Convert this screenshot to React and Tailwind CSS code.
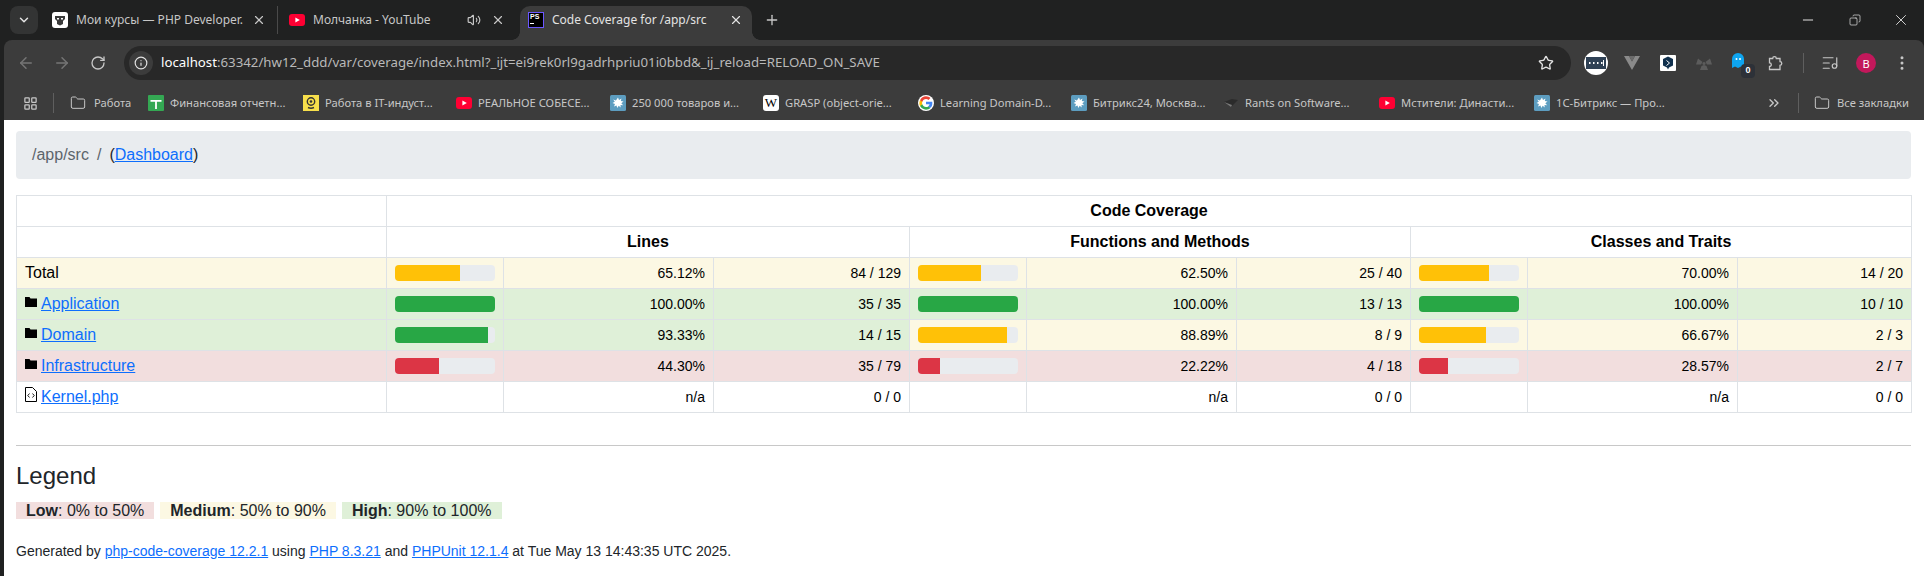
import React from 'react';
import {
  ArrowLeft, ArrowRight, ChevronDown, ChevronsRight, Copy, EllipsisVertical, Folder, Info,
  LayoutGrid, ListMusic, Minus, Plus, RotateCw, Star, Volume2, X,
} from 'lucide-react';

const uiFont = "font-['Noto_Sans',sans-serif]";

const YouTubeIcon = () => (
  <svg viewBox="0 0 16 16" className="w-4 h-4 shrink-0">
    <rect x="0" y="2" width="16" height="12" rx="3" fill="#ff0033" />
    <path d="M6.4 5.4 10.8 8l-4.4 2.6z" fill="#fff" />
  </svg>
);

const OtusIcon = () => (
  <svg viewBox="0 0 16 16" className="w-4 h-4 shrink-0">
    <rect width="16" height="16" rx="3" fill="#fff" />
    <path d="M3 4h10v3l-2 2v3l-3 1.500-3-1.500V9L3 7z" fill="#3a3a3a" />
    <path d="M5 6h2v1.500H5zM9 6h2v1.500H9z" fill="#fff" />
  </svg>
);

const SplatIcon = () => (
  <svg viewBox="0 0 16 16" className="w-4 h-4 shrink-0">
    <rect width="16" height="16" rx="1.500" fill="#5d9dc0" />
    <path d="M8 2.500l1 2.500 2.500-1.500-.7 2.600 2.700.4-2.200 1.700 1.900 2-2.700-.3.200 2.600-2-1.800-1.400 2.300-.8-2.600-2.500 1 1-2.500-2.500-.8 2.300-1.400L3.200 4.500l2.700 1z" fill="#fff" />
  </svg>
);

const SheetIcon = () => (
  <svg viewBox="0 0 16 16" className="w-4 h-4 shrink-0">
    <rect width="16" height="16" rx="1" fill="#34a853" />
    <path d="M2.500 5h11v1.800H8.900V14H7.100V6.800H2.500z" fill="#fff" />
  </svg>
);

const YellowIcon = () => (
  <svg viewBox="0 0 16 16" className="w-4 h-4 shrink-0">
    <rect width="16" height="16" fill="#f7df4b" />
    <circle cx="8" cy="6.500" r="3.700" fill="none" stroke="#333" strokeWidth="1.400" />
    <circle cx="8" cy="6.500" r="1.300" fill="#333" />
    <path d="M5 12.500c2 1 4 1 6 0" fill="none" stroke="#333" strokeWidth="1.400" />
  </svg>
);

const WikiIcon = () => (
  <span className="w-4 h-4 shrink-0 rounded-[3px] bg-white flex items-center justify-center text-black text-[13px] leading-none font-['Liberation_Serif',serif]">
    W
  </span>
);

const GoogleIcon = () => (
  <svg viewBox="0 0 48 48" className="w-4 h-4 shrink-0">
    <circle cx="24" cy="24" r="24" fill="#fff" />
    <path d="M43 24.400c0-1.300-.1-2.600-.4-3.800H24v7.300h10.800c-.5 2.400-1.900 4.500-4 5.900v4.800h6.400C41 35.100 43 30.200 43 24.400z" fill="#4285f4" />
    <path d="M24 44c5.400 0 9.900-1.800 13.200-4.800l-6.400-4.800c-1.800 1.200-4.100 1.900-6.800 1.900-5.200 0-9.600-3.500-11.200-8.200H6.200v5C9.500 39.500 16.200 44 24 44z" fill="#34a853" />
    <path d="M12.800 28.100c-.8-2.400-.8-5.100 0-7.500v-5H6.200c-2.800 5.600-2.800 11.900 0 17.500z" fill="#fbbc05" />
    <path d="M24 12c2.900 0 5.500 1 7.600 3l5.700-5.700C33.900 6.100 29.400 4 24 4 16.200 4 9.500 8.500 6.200 15.600l6.600 5c1.600-4.700 6-8.600 11.200-8.600z" fill="#ea4335" />
  </svg>
);

const RantsIcon = () => (
  <svg viewBox="0 0 16 16" className="w-4 h-4 shrink-0">
    <path d="M1 7l8-3 6 1-7 7z" fill="#2b2b2b" />
    <path d="M1 7l7 5 1-2z" fill="#7a7a7a" />
  </svg>
);

const bookmarks = [
  { icon: <SheetIcon />, title: 'Финансовая отчетн...', width: 'w-[155px]' },
  { icon: <YellowIcon />, title: 'Работа в IT-индуст...', width: 'w-[153px]' },
  { icon: <YouTubeIcon />, title: 'РЕАЛЬНОЕ СОБЕСЕ...', width: 'w-[154px]' },
  { icon: <SplatIcon />, title: '250 000 товаров и...', width: 'w-[153px]' },
  { icon: <WikiIcon />, title: 'GRASP (object-orie...', width: 'w-[155px]' },
  { icon: <GoogleIcon />, title: 'Learning Domain-D...', width: 'w-[153px]' },
  { icon: <SplatIcon />, title: 'Битрикс24, Москва...', width: 'w-[152px]' },
  { icon: <RantsIcon />, title: 'Rants on Software...', width: 'w-[156px]' },
  { icon: <YouTubeIcon />, title: 'Мстители: Династи...', width: 'w-[155px]' },
  { icon: <SplatIcon />, title: '1С-Битрикс — Про...', width: 'w-[232px]' },
];

const TabStrip = () => (
  <div className={`h-10 flex items-start pt-1.5 pl-2.5 text-[12px] leading-none text-[#c7c7c7] ${uiFont}`}>
    <div className="w-7 h-7 rounded-lg bg-[#333434] flex items-center justify-center mr-[10px] text-[#e3e3e3] shrink-0">
      <ChevronDown size={14} strokeWidth={2.5} />
    </div>
    <div className="w-[230px] h-7 shrink-0 flex items-center pl-[4px] pr-[11px] border-r border-[#4a4a4a]">
      <OtusIcon />
      <span className="ml-2 flex-1 whitespace-nowrap">Мои курсы — PHP Developer.</span>
      <X size={14} strokeWidth={2} className="shrink-0" />
    </div>
    <div className="w-[242px] h-7 shrink-0 flex items-center pl-[11px] pr-[15px]">
      <YouTubeIcon />
      <span className="ml-2 flex-1 whitespace-nowrap">Молчанка - YouTube</span>
      <Volume2 size={14} className="mr-2.5 shrink-0" />
      <X size={14} strokeWidth={2} className="shrink-0" />
    </div>
    <div className="relative w-[232px] h-[34px] shrink-0 rounded-t-[10px] bg-[#3c3c3c] flex items-center pl-2 pr-[9px] pb-[6px] text-[#e3e3e3]">
      <span className="absolute -left-2 bottom-0 w-2 h-2 bg-[radial-gradient(circle_at_0_0,#202121_7.5px,#3c3c3c_8px)]" />
      <span className="absolute -right-2 bottom-0 w-2 h-2 bg-[radial-gradient(circle_at_100%_0,#202121_7.5px,#3c3c3c_8px)]" />
      <span className="w-4 h-4 shrink-0 bg-black border border-[#6b57ff] text-white text-[7px] leading-[8px] font-bold pl-px font-['Liberation_Sans',sans-serif]">
        PS
        <span className="block w-1 h-px mt-[2px] bg-white" />
      </span>
      <span className="ml-2 flex-1 whitespace-nowrap">Code Coverage for /app/src</span>
      <X size={14} strokeWidth={2} className="shrink-0" />
    </div>
    <Plus size={16} strokeWidth={2} className="ml-3 mt-1.5 text-[#c7c7c7] shrink-0" />
    <div className="ml-auto h-7 flex items-center text-[#e3e3e3]">
      <Minus size={16} strokeWidth={1.5} className="mr-[33px]" />
      <Copy size={12} strokeWidth={1.4} className="mr-[31px] -scale-x-100" />
      <X size={18} strokeWidth={1.2} className="mr-[14px]" />
    </div>
  </div>
);

const ExtensionIcons = () => (
  <div className="flex items-center ml-[13px] shrink-0">
    <span className="w-6 h-6 rounded-full bg-white flex items-center justify-center">
      <svg viewBox="0 0 20 12" className="w-5 h-3">
        <rect width="20" height="12" fill="#2f4155" />
        <path d="M3 6h1.500M7 6h1.500M11 6h1.500M15 6h1.500" stroke="#fff" strokeWidth="2" />
        <path d="M17.500 3v6" stroke="#fff" />
      </svg>
    </span>
    <svg viewBox="0 0 16 14" className="w-4 h-[14px] ml-[16px]">
      <path d="M0 0h5l3 5.500L11 0h5L8 14z" fill="#8a8a8a" />
      <path d="M5 0h6L8 5.500z" fill="#6b6b6b" />
    </svg>
    <svg viewBox="0 0 16 16" className="w-4 h-4 ml-[20px]">
      <rect width="16" height="16" rx="1" fill="#fff" />
      <path d="M8 1.500 13 4v6.500l-4 2-1 2-1-2-4-2V4z" fill="#10304d" />
      <path d="M6.500 5.500 9.500 8l-3 2.500" fill="none" stroke="#fff" />
    </svg>
    <svg viewBox="0 0 16 16" className="w-4 h-4 ml-[20px]">
      <circle cx="8" cy="8.500" r="1.500" fill="#5c5c5c" />
      <path d="M2 3.500 6.500 7 5 9.500H0zM14 3.500 9.500 7 11 9.500h5zM5.500 11 8 10l2.500 1 1.500 4H4z" fill="#5c5c5c" />
    </svg>
    <div className="relative w-6 h-6 ml-[16px] flex items-center justify-center">
      <svg viewBox="0 0 12 16" className="w-3 h-4 -ml-1 -mt-1">
        <path d="M0 15V6a6 6 0 0 1 12 0v9l-3-1.500-3 1.500-3-1.500z" fill="#0ea5f0" />
        <circle cx="4.500" cy="6" r="1" fill="#fff" />
        <circle cx="8" cy="6" r="1" fill="#fff" />
      </svg>
      <span className="absolute right-[-3px] bottom-[-3px] w-3.5 h-3.5 rounded bg-[#2d3138] flex items-center justify-center text-white text-[9px] font-bold font-['Liberation_Sans',sans-serif]">
        0
      </span>
    </div>
    <svg viewBox="0 0 16 16" className="w-4 h-4 ml-[16px] text-[#c7c7c7]" fill="none" stroke="currentColor" strokeWidth="1.300">
      <path d="M1.500 3.500h3.200a1.800 1.800 0 0 1 3.600 0h3.700v3.200a1.800 1.800 0 0 1 0 3.600v4.200H1.500v-3a1.800 1.800 0 0 0 0-3.600z" />
    </svg>
    <span className="w-px h-5 bg-[#5f5f5f] ml-[19px]" />
    <ListMusic size={18} strokeWidth={1.6} className="ml-[17px] text-[#c7c7c7]" />
    <span className="w-5 h-5 rounded-full bg-[#c2185b] text-white text-[11px] leading-none flex items-center justify-center ml-[17px]">
      В
    </span>
    <EllipsisVertical size={18} strokeWidth={2} className="ml-[17px] text-[#c7c7c7]" />
  </div>
);

const Toolbar = () => (
  <div className={`bg-[#3c3c3c] rounded-tl-lg rounded-tr-lg h-20 ml-1 ${uiFont}`}>
    <div className="h-[46px] flex items-center pl-[13px] text-[#c7c7c7]">
      <ArrowLeft size={18} className="text-[#757575] shrink-0" />
      <ArrowRight size={18} className="ml-[18px] text-[#757575] shrink-0" />
      <RotateCw size={16} className="ml-[19px] shrink-0" />
      <div className="ml-[18px] w-[1447px] h-[34px] shrink-0 rounded-full bg-[#282828] flex items-center pl-[5px] pr-[17px]">
        <span className="w-6 h-6 rounded-full bg-[#3c3c3c] flex items-center justify-center">
          <Info size={14} className="text-[#e3e3e3]" />
        </span>
        <span className="ml-2 flex-1 text-[13.25px] whitespace-nowrap text-[#b9b9b9]">
          <span className="text-white">localhost</span>:63342/hw12_ddd/var/coverage/index.html?_ijt=ei9rek0rl9gadrhpriu01i0bbd&amp;_ij_reload=RELOAD_ON_SAVE
        </span>
        <Star size={16} className="text-[#e3e3e3]" />
      </div>
      <ExtensionIcons />
    </div>
    <div className="h-[34px] flex items-center pl-[19px] text-[11.2px] text-[#c7c7c7] whitespace-nowrap">
      <LayoutGrid size={15} className="text-[#c7c7c7] shrink-0" />
      <span className="w-px h-5 bg-[#5f5f5f] ml-[15px] shrink-0" />
      <div className="w-[78px] ml-4 flex items-center shrink-0">
        <Folder size={16} strokeWidth={1.5} />
        <span className="ml-[8px]">Работа</span>
      </div>
      {bookmarks.map((b) => (
        <div key={b.title} className={`${b.width} flex items-center shrink-0`}>
          {b.icon}
          <span className="ml-[6px]">{b.title}</span>
        </div>
      ))}
      <ChevronsRight size={16} className="shrink-0" />
      <span className="w-px h-5 bg-[#5f5f5f] ml-[16px] shrink-0" />
      <Folder size={16} strokeWidth={1.5} className="ml-[15px] shrink-0" />
      <span className="ml-[7px]">Все закладки</span>
    </div>
  </div>
);

const tones = {
  warning: { row: 'bg-[#fcf8e3]', bar: 'bg-[#ffc107]' },
  success: { row: 'bg-[#dff0d8]', bar: 'bg-[#28a745]' },
  danger: { row: 'bg-[#f2dede]', bar: 'bg-[#dc3545]' },
  none: { row: 'bg-white', bar: '' },
};

const toneFor = (pct) => {
  if (pct === null) return 'none';
  if (pct < 50) return 'danger';
  if (pct < 90) return 'warning';
  return 'success';
};

const rows = [
  { name: 'Total', type: 'total', tone: 'warning', cells: [[65.12, '84 / 129'], [62.5, '25 / 40'], [70, '14 / 20']] },
  { name: 'Application', type: 'dir', tone: 'success', cells: [[100, '35 / 35'], [100, '13 / 13'], [100, '10 / 10']] },
  { name: 'Domain', type: 'dir', tone: 'success', cells: [[93.33, '14 / 15'], [88.89, '8 / 9'], [66.67, '2 / 3']] },
  { name: 'Infrastructure', type: 'dir', tone: 'danger', cells: [[44.3, '35 / 79'], [22.22, '4 / 18'], [28.57, '2 / 7']] },
  { name: 'Kernel.php', type: 'file', tone: 'none', cells: [[null, '0 / 0'], [null, '0 / 0'], [null, '0 / 0']] },
];

const border = 'border border-[#dee2e6]';

const FolderGlyph = () => (
  <svg viewBox="0 0 12 11" className="inline-block w-3 h-[11px] mr-1 align-[2px]">
    <path d="M0 1h4.500l1 1.500H12V11H0z" fill="#000" />
  </svg>
);

const FileGlyph = () => (
  <svg viewBox="0 0 12 15" className="inline-block w-3 h-[15px] mr-1 align-[0px]" fill="none" stroke="#000">
    <path d="M.5.500h7l4 4v10H.5z" />
    <path d="M4.500 6.500 2.800 8.500l1.700 2M7.500 6.500l1.700 2-1.700 2" strokeWidth="0.900" />
  </svg>
);

const Bar = ({ pct, tone }) => (
  <div className="w-[100px] h-4 rounded bg-[#e9ecef] overflow-hidden">
    <div className={`h-full ${tones[tone].bar}`} style={{ width: `${pct}%` }} />
  </div>
);

const CoverageRow = ({ row }) => (
  <tr className={tones[row.tone].row}>
    <td className={`${border} px-2 py-[3px]`}>
      {row.type === 'total' && 'Total'}
      {row.type === 'dir' && <FolderGlyph />}
      {row.type === 'file' && <FileGlyph />}
      {row.type !== 'total' && <a href="#" className="text-[#0d6efd] underline">{row.name}</a>}
    </td>
    {row.cells.map(([pct, count], i) => {
      const tone = toneFor(pct);
      return (
        <React.Fragment key={i}>
          <td className={`${border} px-2 py-[3px] ${tones[tone].row}`}>
            {pct !== null && <Bar pct={pct} tone={tone} />}
          </td>
          <td className={`${border} px-2 py-[3px] text-right text-[14px] ${tones[tone].row}`}>
            {pct === null ? 'n/a' : `${pct.toFixed(2)}%`}
          </td>
          <td className={`${border} px-2 py-[3px] text-right text-[14px] ${tones[tone].row}`}>{count}</td>
        </React.Fragment>
      );
    })}
  </tr>
);

const CoverageTable = () => (
  <table className="table-fixed w-[1895px] border-collapse text-black">
    <colgroup>
      <col className="w-[370px]" />
      <col className="w-[117px]" />
      <col className="w-[210px]" />
      <col className="w-[196px]" />
      <col className="w-[117px]" />
      <col className="w-[210px]" />
      <col className="w-[174px]" />
      <col className="w-[117px]" />
      <col className="w-[210px]" />
      <col className="w-[174px]" />
    </colgroup>
    <thead className="bg-white">
      <tr>
        <td className={`${border} px-2 py-[3px]`}>&nbsp;</td>
        <td colSpan={9} className={`${border} px-2 py-[3px] text-center font-bold`}>Code Coverage</td>
      </tr>
      <tr>
        <td className={`${border} px-2 py-[3px]`}>&nbsp;</td>
        <td colSpan={3} className={`${border} px-2 py-[3px] text-center font-bold`}>Lines</td>
        <td colSpan={3} className={`${border} px-2 py-[3px] text-center font-bold`}>Functions and Methods</td>
        <td colSpan={3} className={`${border} px-2 py-[3px] text-center font-bold`}>Classes and Traits</td>
      </tr>
    </thead>
    <tbody>
      {rows.map((row) => (
        <CoverageRow key={row.name} row={row} />
      ))}
    </tbody>
  </table>
);

const Legend = () => (
  <>
    <hr className="mt-8 mb-[15px] border-t border-[#c8c8c8]" />
    <h4 className="text-2xl leading-[29px] mb-[9px]">Legend</h4>
    <p className="mb-4">
      <span className="bg-[#f2dede] px-[10px] mr-[6px]"><strong>Low</strong>: 0% to 50%</span>
      <span className="bg-[#fcf8e3] px-[10px] mr-[6px]"><strong>Medium</strong>: 50% to 90%</span>
      <span className="bg-[#dff0d8] px-[10px]"><strong>High</strong>: 90% to 100%</span>
    </p>
    <p className="text-sm pt-[2px]">
      Generated by <a href="#" className="text-[#0d6efd] underline">php-code-coverage 12.2.1</a> using{' '}
      <a href="#" className="text-[#0d6efd] underline">PHP 8.3.21</a> and{' '}
      <a href="#" className="text-[#0d6efd] underline">PHPUnit 12.1.4</a> at Tue May 13 14:43:35 UTC 2025.
    </p>
  </>
);

export default function App() {
  return (
    <div className="w-[1924px] h-[576px] overflow-hidden bg-[#202121] flex flex-col">
      <TabStrip />
      <Toolbar />
      <main className="ml-1 flex-1 bg-white pl-3 pr-[13px] pt-[11px] text-[#212529] text-base leading-6 font-['Liberation_Sans',sans-serif]">
        <nav className="h-12 rounded bg-[#e9ecef] px-4 flex items-center text-[#5c646b] mb-4">
          /app/src
          <span className="px-2">/</span>
          <span className="text-[#212529]">
            (<a href="#" className="text-[#0d6efd] underline">Dashboard</a>)
          </span>
        </nav>
        <CoverageTable />
        <Legend />
      </main>
    </div>
  );
}
